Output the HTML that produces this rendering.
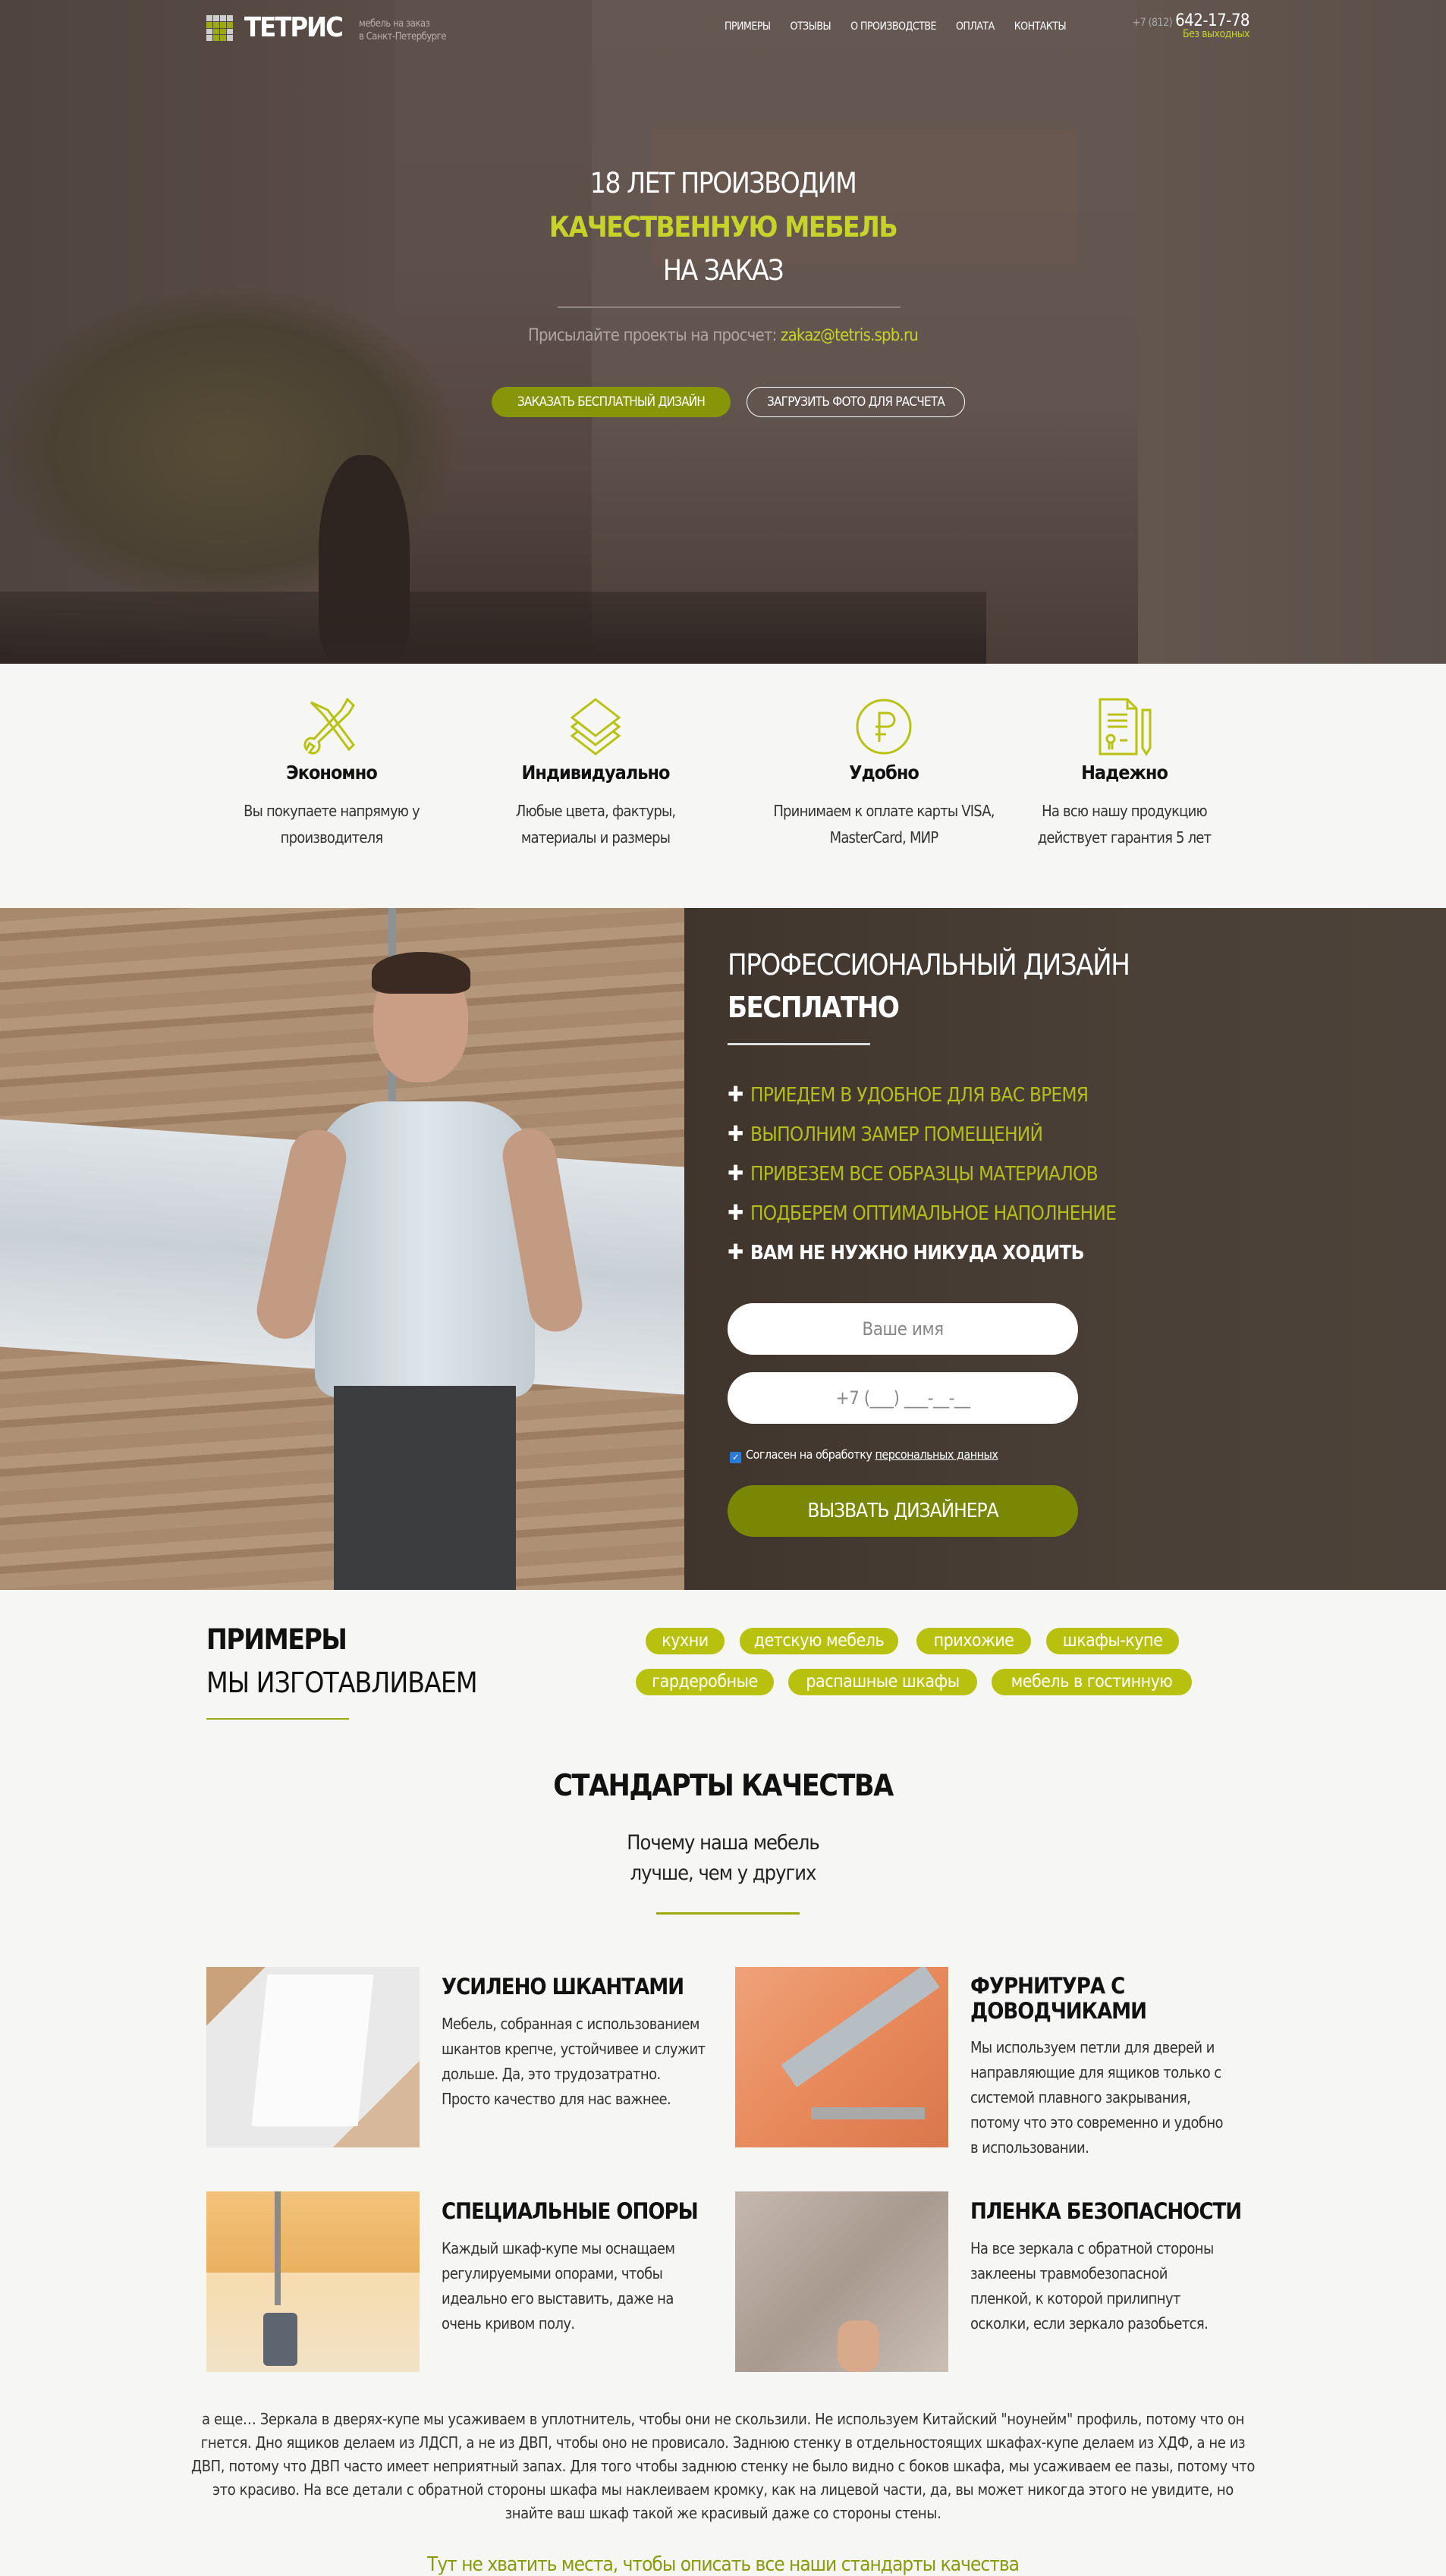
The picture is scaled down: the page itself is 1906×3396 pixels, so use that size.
<!DOCTYPE html>
<html><head><meta charset="utf-8">
<style>
*{margin:0;padding:0;box-sizing:border-box}
body{width:1906px;height:3389px;position:relative;overflow:hidden;background:#f6f6f5;font-family:"Liberation Sans Narrow","DejaVu Sans Condensed","Liberation Sans",sans-serif;color:#222;letter-spacing:-0.5px}
.a{position:absolute}
.c{text-align:center}
.hero{left:0;top:0;width:1906px;height:875px;background:linear-gradient(180deg,#5e514c 0%,#5d4f49 40%,#554641 70%,#3e322e 100%);overflow:hidden}
.w{color:#fff}
.g{color:#c7d22a}
.tag{position:absolute;height:35px;line-height:35px;border-radius:18px;background:#b8c20e;color:#fff;font-size:23px;text-align:center}
.ttl{font-size:29px;font-weight:bold;color:#111;letter-spacing:-1px}
.txt{font-size:20px;line-height:33px;color:#333;letter-spacing:-0.6px}
.li{position:absolute;left:959px;font-size:26px;color:#b3bd1b;letter-spacing:-0.8px}
.li b.p{display:inline-block;width:30px;color:#fff;font-size:28px}
</style></head><body>

<div class="a hero">
  <div class="a" style="left:780px;top:0;width:720px;height:875px;background:linear-gradient(180deg,#655752,#62544e 60%,#4a3d38)"></div>
  <div class="a" style="left:860px;top:170px;width:560px;height:180px;background:#6c5a50;opacity:.45"></div>
  <div class="a" style="left:1500px;top:0;width:406px;height:875px;background:linear-gradient(90deg,#63564f,#5b4f49)"></div>
  <div class="a" style="left:0;top:0;width:520px;height:875px;background:linear-gradient(90deg,#4f4440,#5a4c46)"></div>
  <div class="a" style="left:0;top:380px;width:600px;height:420px;border-radius:50%;background:radial-gradient(#564c36,#4b4133 55%,rgba(75,65,51,0) 72%)"></div>
  <div class="a" style="left:420px;top:600px;width:120px;height:275px;border-radius:45% 45% 20% 20%;background:#2e2420"></div>
  <div class="a" style="left:0;top:780px;width:1300px;height:95px;background:linear-gradient(180deg,rgba(45,36,32,.5),#2f2623)"></div>
  <div class="a" style="left:272px;top:20px;width:35px;height:34px;display:grid;grid-template-columns:repeat(4,8px);gap:1px">
    <i style="background:#ccc"></i><i style="background:#ccc"></i><i style="background:#ccc"></i><i style="background:#ccc"></i>
    <i style="background:#9aaa10"></i><i style="background:#9aaa10"></i><i style="background:#9aaa10"></i><i style="background:#9aaa10"></i>
    <i style="background:#ccc"></i><i style="background:#9aaa10"></i><i style="background:#9aaa10"></i><i style="background:#ccc"></i>
    <i style="background:#ccc"></i><i style="background:#9aaa10"></i><i style="background:#9aaa10"></i><i style="background:#ccc"></i>
  </div>
  <div class="a w" style="left:322px;top:16px;font-size:36px;font-weight:bold;letter-spacing:-2px">ТЕТРИС</div>
  <div class="a" style="left:473px;top:23px;font-size:13px;line-height:17px;color:#b9aeaa">мебель на заказ<br>в Санкт-Петербурге</div>
  <div class="a w" style="left:955px;top:27px;font-size:14px"><span>ПРИМЕРЫ</span><span style="margin-left:26px">ОТЗЫВЫ</span><span style="margin-left:26px">О ПРОИЗВОДСТВЕ</span><span style="margin-left:26px">ОПЛАТА</span><span style="margin-left:26px">КОНТАКТЫ</span></div>
  <div class="a" style="right:259px;top:15px;text-align:right"><span style="color:#aaa;font-size:14px">+7 (812)</span> <span class="w" style="font-size:22px">642-17-78</span><div class="g" style="font-size:14px;margin-top:-3px">Без выходных</div></div>
  <div class="a w c" style="left:0;width:1906px;top:220px;font-size:37px;letter-spacing:-1.5px">18 ЛЕТ ПРОИЗВОДИМ</div>
  <div class="a g c" style="left:0;width:1906px;top:278px;font-size:37px;font-weight:bold;letter-spacing:-1.5px">КАЧЕСТВЕННУЮ МЕБЕЛЬ</div>
  <div class="a w c" style="left:0;width:1906px;top:335px;font-size:37px;letter-spacing:-1.5px">НА ЗАКАЗ</div>
  <div class="a" style="left:735px;top:404px;width:452px;height:2px;background:#8e8480"></div>
  <div class="a c" style="left:0;width:1906px;top:430px;font-size:22px;color:#b0a6a2;letter-spacing:-0.8px">Присылайте проекты на просчет: <span class="g">zakaz@tetris.spb.ru</span></div>
  <div class="a w c" style="left:648px;top:510px;width:315px;height:40px;line-height:40px;border-radius:20px;background:#879508;font-size:17px;letter-spacing:-0.8px">ЗАКАЗАТЬ БЕСПЛАТНЫЙ ДИЗАЙН</div>
  <div class="a w c" style="left:984px;top:510px;width:288px;height:40px;line-height:38px;border-radius:20px;border:1.5px solid #fff;font-size:17px;letter-spacing:-0.8px">ЗАГРУЗИТЬ ФОТО ДЛЯ РАСЧЕТА</div>
</div>

<div class="a" style="left:0;top:875px;width:1906px;height:322px;background:#f6f6f5"></div>
<svg class="a" style="left:400px;top:918px" width="74" height="80" viewBox="0 0 74 80" fill="none" stroke="#b8c210" stroke-width="3"><path d="M10 8 L26 24 L60 70 L66 64 L32 18 Z"/><path d="M58 4 L66 12 L60 22 L20 60 C24 70 16 78 8 74 L14 66 L8 62 L4 70 C-2 62 6 52 14 56 L50 18 Z"/></svg>
<svg class="a" style="left:748px;top:918px" width="74" height="80" viewBox="0 0 74 80" fill="none" stroke="#b8c210" stroke-width="3"><path d="M37 4 L68 28 L37 52 L6 28 Z"/><path d="M14 34 L6 40 L37 64 L68 40 L60 34"/><path d="M14 46 L6 52 L37 76 L68 52 L60 46"/></svg>
<svg class="a" style="left:1126px;top:918px" width="78" height="80" viewBox="0 0 78 80" fill="none" stroke="#b8c210" stroke-width="3"><circle cx="39" cy="40" r="35"/><path d="M33 60 V22 H44 A9 9 0 0 1 44 40 H28 M28 50 H42"/></svg>
<svg class="a" style="left:1446px;top:918px" width="74" height="80" viewBox="0 0 74 80" fill="none" stroke="#b8c210" stroke-width="3"><path d="M4 4 H40 L52 16 V76 H4 Z M40 4 V16 H52"/><path d="M14 24 H40 M14 32 H40 M14 40 H40"/><circle cx="18" cy="56" r="5"/><path d="M16 61 V70 M20 61 V70 M30 58 H40"/><path d="M60 18 H70 V68 L65 76 L60 68 Z"/></svg>
<div class="a c" style="left:277px;width:320px;top:1004px;font-size:25px;font-weight:bold;color:#111;letter-spacing:-1px">Экономно</div>
<div class="a c" style="left:277px;width:320px;top:1052px;font-size:20px;line-height:35px;color:#333;letter-spacing:-0.8px">Вы покупаете напрямую у<br>производителя</div>
<div class="a c" style="left:625px;width:320px;top:1004px;font-size:25px;font-weight:bold;color:#111;letter-spacing:-1px">Индивидуально</div>
<div class="a c" style="left:625px;width:320px;top:1052px;font-size:20px;line-height:35px;color:#333;letter-spacing:-0.8px">Любые цвета, фактуры,<br>материалы и размеры</div>
<div class="a c" style="left:985px;width:360px;top:1004px;font-size:25px;font-weight:bold;color:#111;letter-spacing:-1px">Удобно</div>
<div class="a c" style="left:985px;width:360px;top:1052px;font-size:20px;line-height:35px;color:#333;letter-spacing:-0.8px">Принимаем к оплате карты VISA,<br>MasterCard, МИР</div>
<div class="a c" style="left:1322px;width:320px;top:1004px;font-size:25px;font-weight:bold;color:#111;letter-spacing:-1px">Надежно</div>
<div class="a c" style="left:1322px;width:320px;top:1052px;font-size:20px;line-height:35px;color:#333;letter-spacing:-0.8px">На всю нашу продукцию<br>действует гарантия 5 лет</div>

<div class="a" style="left:0;top:1197px;width:902px;height:899px;overflow:hidden;background:repeating-linear-gradient(176deg,#a8896d 0 18px,#b4967a 18px 34px,#9d7d62 34px 44px,#ae9074 44px 64px)">
  <div class="a" style="left:0;top:310px;width:902px;height:300px;background:linear-gradient(180deg,#dfe4e8,#c9d0d6 50%,#e2e6e9);transform:skewY(4deg)"></div>
  <div class="a" style="left:512px;top:0;width:10px;height:330px;background:#8c9296"></div>
  <div class="a" style="left:492px;top:70px;width:125px;height:160px;border-radius:45%;background:#c99e85"></div>
  <div class="a" style="left:490px;top:58px;width:130px;height:55px;border-radius:50% 50% 20% 20%;background:#3a2a22"></div>
  <div class="a" style="left:415px;top:255px;width:290px;height:390px;border-radius:90px 90px 30px 30px;background:linear-gradient(90deg,#b9c4cc,#dfe6eb 50%,#c3ccd3)"></div>
  <div class="a" style="left:360px;top:290px;width:75px;height:280px;border-radius:40px;background:#c39a82;transform:rotate(12deg)"></div>
  <div class="a" style="left:680px;top:290px;width:70px;height:270px;border-radius:40px;background:#c39a82;transform:rotate(-10deg)"></div>
  <div class="a" style="left:440px;top:630px;width:240px;height:280px;background:#3c3d3f"></div>
</div>
<div class="a" style="left:902px;top:1197px;width:1004px;height:899px;background:linear-gradient(90deg,#3f352d,#4a4037 60%,#4c4239)"></div>
<div class="a w" style="left:959px;top:1250px;font-size:38px;letter-spacing:-1.5px">ПРОФЕССИОНАЛЬНЫЙ ДИЗАЙН</div>
<div class="a w" style="left:959px;top:1306px;font-size:38px;font-weight:bold;letter-spacing:-1.5px">БЕСПЛАТНО</div>
<div class="a" style="left:959px;top:1375px;width:188px;height:3px;background:#ddd"></div>
<div class="li" style="top:1426px"><b class="p">✚</b>ПРИЕДЕМ В УДОБНОЕ ДЛЯ ВАС ВРЕМЯ</div>
<div class="li" style="top:1478px"><b class="p">✚</b>ВЫПОЛНИМ ЗАМЕР ПОМЕЩЕНИЙ</div>
<div class="li" style="top:1530px"><b class="p">✚</b>ПРИВЕЗЕМ ВСЕ ОБРАЗЦЫ МАТЕРИАЛОВ</div>
<div class="li" style="top:1582px"><b class="p">✚</b>ПОДБЕРЕМ ОПТИМАЛЬНОЕ НАПОЛНЕНИЕ</div>
<div class="li" style="top:1634px;color:#fff;font-weight:bold"><b class="p">✚</b>ВАМ НЕ НУЖНО НИКУДА ХОДИТЬ</div>
<div class="a c" style="left:959px;top:1718px;width:462px;height:68px;line-height:68px;border-radius:34px;background:#fff;color:#888;font-size:24px">Ваше имя</div>
<div class="a c" style="left:959px;top:1809px;width:462px;height:68px;line-height:68px;border-radius:34px;background:#fff;color:#888;font-size:24px">+7 (___) ___-__-__</div>
<div class="a w" style="left:962px;top:1908px;font-size:16px;letter-spacing:-0.5px"><span style="display:inline-block;width:15px;height:15px;background:#2a7ad6;border-radius:2px;vertical-align:-2px;margin-right:6px;color:#fff;font-size:12px;line-height:15px;text-align:center">✓</span>Согласен на обработку <u>персональных данных</u></div>
<div class="a w c" style="left:959px;top:1958px;width:462px;height:68px;line-height:68px;border-radius:34px;background:#7a8705;font-size:26px;letter-spacing:-1px">ВЫЗВАТЬ ДИЗАЙНЕРА</div>

<div class="a" style="left:272px;top:2140px;font-size:37px;font-weight:bold;color:#111;letter-spacing:-1.5px">ПРИМЕРЫ</div>
<div class="a" style="left:272px;top:2197px;font-size:37px;color:#111;letter-spacing:-1px">МЫ ИЗГОТАВЛИВАЕМ</div>
<div class="a" style="left:272px;top:2265px;width:188px;height:2px;background:#9aaa10"></div>
<div class="tag" style="left:851px;top:2146px;width:104px">кухни</div>
<div class="tag" style="left:975px;top:2146px;width:209px">детскую мебель</div>
<div class="tag" style="left:1208px;top:2146px;width:151px">прихожие</div>
<div class="tag" style="left:1379px;top:2146px;width:175px">шкафы-купе</div>
<div class="tag" style="left:838px;top:2200px;width:182px">гардеробные</div>
<div class="tag" style="left:1039px;top:2200px;width:249px">распашные шкафы</div>
<div class="tag" style="left:1307px;top:2200px;width:264px">мебель в гостинную</div>

<div class="a c" style="left:0;width:1906px;top:2332px;font-size:39px;font-weight:bold;color:#111;letter-spacing:-1.5px">СТАНДАРТЫ КАЧЕСТВА</div>
<div class="a c" style="left:0;width:1906px;top:2410px;font-size:27px;line-height:40px;color:#222;letter-spacing:-1px">Почему наша мебель<br>лучше, чем у других</div>
<div class="a" style="left:865px;top:2521px;width:189px;height:3px;background:#9aaa10"></div>

<div class="a" style="left:272px;top:2593px;width:281px;height:238px;background:linear-gradient(135deg,#c9a27c 0 15%,#e9e9e9 15% 78%,#d8b89a 78%)"><div class="a" style="left:70px;top:10px;width:140px;height:200px;background:#fbfbfb;transform:skewX(-6deg)"></div></div>
<div class="a ttl" style="left:582px;top:2602px">УСИЛЕНО ШКАНТАМИ</div>
<div class="a txt" style="left:582px;top:2652px">Мебель, собранная с использованием<br>шкантов крепче, устойчивее и служит<br>дольше. Да, это трудозатратно.<br>Просто качество для нас важнее.</div>

<div class="a" style="left:969px;top:2593px;width:281px;height:238px;overflow:hidden;background:linear-gradient(135deg,#f0a27a,#e88a5c 50%,#d9774a)"><div class="a" style="left:50px;top:60px;width:230px;height:36px;background:#b7bec3;transform:rotate(-35deg)"></div><div class="a" style="left:100px;top:185px;width:150px;height:16px;background:#a9a9a9"></div></div>
<div class="a ttl" style="left:1279px;top:2602px;line-height:33px">ФУРНИТУРА С<br>ДОВОДЧИКАМИ</div>
<div class="a txt" style="left:1279px;top:2683px">Мы используем петли для дверей и<br>направляющие для ящиков только с<br>системой плавного закрывания,<br>потому что это современно и удобно<br>в использовании.</div>

<div class="a" style="left:272px;top:2889px;width:281px;height:238px;background:linear-gradient(180deg,#f3c37a,#eab060 45%,#f6dcae 45%,#f2e2c6)"><div class="a" style="left:90px;top:0;width:8px;height:150px;background:#8a8a8a"></div><div class="a" style="left:75px;top:160px;width:45px;height:70px;background:#5d6670;border-radius:6px"></div></div>
<div class="a ttl" style="left:582px;top:2898px">СПЕЦИАЛЬНЫЕ ОПОРЫ</div>
<div class="a txt" style="left:582px;top:2948px">Каждый шкаф-купе мы оснащаем<br>регулируемыми опорами, чтобы<br>идеально его выставить, даже на<br>очень кривом полу.</div>

<div class="a" style="left:969px;top:2889px;width:281px;height:238px;background:linear-gradient(135deg,#c5b8ae,#a99a90 50%,#cbbfb6)"><div class="a" style="left:135px;top:170px;width:55px;height:68px;border-radius:20px;background:#d9a98b"></div></div>
<div class="a ttl" style="left:1279px;top:2898px">ПЛЕНКА БЕЗОПАСНОСТИ</div>
<div class="a txt" style="left:1279px;top:2948px">На все зеркала с обратной стороны<br>заклеены травмобезопасной<br>пленкой, к которой прилипнут<br>осколки, если зеркало разобьется.</div>

<div class="a c" style="left:250px;width:1406px;top:3174px;font-size:20px;line-height:31px;color:#333;letter-spacing:-0.4px">а еще… Зеркала в дверях-купе мы усаживаем в уплотнитель, чтобы они не скользили. Не используем Китайский "ноунейм" профиль, потому что он гнется. Дно ящиков делаем из ЛДСП, а не из ДВП, чтобы оно не провисало. Заднюю стенку в отдельностоящих шкафах-купе делаем из ХДФ, а не из ДВП, потому что ДВП часто имеет неприятный запах. Для того чтобы заднюю стенку не было видно с боков шкафа, мы усаживаем ее пазы, потому что это красиво. На все детали с обратной стороны шкафа мы наклеиваем кромку, как на лицевой части, да, вы может никогда этого не увидите, но знайте ваш шкаф такой же красивый даже со стороны стены.</div>
<div class="a c" style="left:0;width:1906px;top:3366px;font-size:26px;color:#8a9a0c;letter-spacing:-1px">Тут не хватить места, чтобы описать все наши стандарты качества</div>
</body></html>
